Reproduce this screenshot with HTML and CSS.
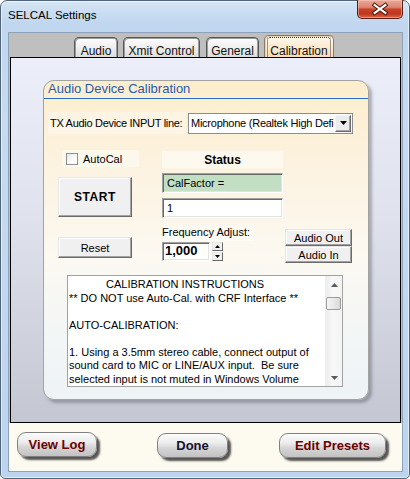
FILE: index.html
```html
<!DOCTYPE html>
<html>
<head>
<meta charset="utf-8">
<link rel="stylesheet" href="styles.css">
</head>
<body>
<div class="window">
  <div class="titlebar">
    <span class="title">SELCAL Settings</span>
    <div class="close">
      <svg width="46" height="19" viewBox="0 0 46 19">
        <path d="M18 6 L29 14 M29 6 L18 14" stroke="#4a1208" stroke-width="4.2" stroke-linecap="square" fill="none"/>
        <path d="M18 6 L29 14 M29 6 L18 14" stroke="#ffffff" stroke-width="2.2" stroke-linecap="square" fill="none"/>
      </svg>
    </div>
  </div>
  <div class="client">
    <div class="tabstrip">
      <div class="tab t-audio">Audio</div>
      <div class="tab t-xmit">Xmit Control</div>
      <div class="tab t-general">General</div>
      <div class="tab t-cal active"><span class="focus">Calibration</span></div>
    </div>
    <div class="panel">
      <div class="card">
        <div class="card-title">Audio Device Calibration</div>
        <div class="tx-row">
          <span class="tx-label">TX Audio Device INPUT line:</span>
          <div class="select">
            <span class="select-text">Microphone (Realtek High Defi</span>
            <span class="select-btn">
              <svg width="7" height="4" viewBox="0 0 7 4"><path d="M0 0 H7 L3.5 4 Z" fill="#000"/></svg>
            </span>
          </div>
        </div>
        <div class="controls">
          <div class="col col1">
            <div class="autocal"><span class="checkbox"></span><span>AutoCal</span></div>
            <div class="btn start">START</div>
            <div class="btn reset">Reset</div>
          </div>
          <div class="col col2">
            <div class="status">Status</div>
            <div class="field calfactor">CalFactor =</div>
            <div class="field value">1</div>
            <div class="freq-label">Frequency Adjust:</div>
            <div class="spin-row">
              <div class="field num">1,000</div>
              <div class="spin">
                <span class="spin-btn"><svg width="5" height="3" viewBox="0 0 5 3"><path d="M2.5 0 L5 3 H0 Z" fill="#000"/></svg></span>
                <span class="spin-btn"><svg width="5" height="3" viewBox="0 0 5 3"><path d="M0 0 H5 L2.5 3 Z" fill="#000"/></svg></span>
              </div>
            </div>
          </div>
          <div class="col col3">
            <div class="btn audio">Audio Out</div>
            <div class="btn audio">Audio In</div>
          </div>
        </div>
        <div class="textbox">
          <div class="text">
            <div class="line"><span class="indent">CALIBRATION INSTRUCTIONS</span></div>
            <div class="line">** DO NOT use Auto-Cal. with CRF Interface **</div>
            <div class="line"> </div>
            <div class="line">AUTO-CALIBRATION:</div>
            <div class="line"> </div>
            <div class="line">1. Using a 3.5mm stereo cable, connect output of</div>
            <div class="line">sound card to MIC or LINE/AUX input.  Be sure</div>
            <div class="line">selected input is not muted in Windows Volume</div>
          </div>
          <div class="scrollbar">
            <span class="sb-arrow"><svg width="7" height="4" viewBox="0 0 7 4"><path d="M3.5 0 L7 4 H0 Z" fill="#5a5a5a"/></svg></span>
            <span class="sb-track"><span class="sb-thumb"></span></span>
            <span class="sb-arrow"><svg width="7" height="4" viewBox="0 0 7 4"><path d="M0 0 H7 L3.5 4 Z" fill="#5a5a5a"/></svg></span>
          </div>
        </div>
      </div>
    </div>
    <div class="footer">
      <div class="pill p-log">View Log</div>
      <div class="pill p-done">Done</div>
      <div class="pill p-edit">Edit Presets</div>
    </div>
  </div>
</div>
</body>
</html>
```

FILE: styles.css
```css
* { box-sizing: border-box; }
html, body { margin: 0; padding: 0; }
body {
  width: 410px;
  height: 479px;
  overflow: hidden;
  background: #ffffff;
  font-family: "Liberation Sans", Arial, sans-serif;
  font-size: 11px;
  color: #000;
}

.window {
  width: 410px;
  height: 479px;
  border: 1px solid #50647a;
  border-radius: 7px 7px 5px 5px;
  background: linear-gradient(180deg, #d5e5f6 0px, #c0d7ef 22px, #c6dbf1 120px, #bcd4ed 100%);
  box-shadow: inset 0 0 0 1px rgba(255,255,255,0.55);
  display: flex;
  flex-direction: column;
}

.titlebar {
  height: 31px;
  display: flex;
  justify-content: space-between;
  align-items: flex-start;
  padding-left: 7px;
}
.title {
  margin-top: 7px;
  font-size: 11.5px;
  line-height: 14px;
  color: #000;
}
.close {
  width: 46px;
  height: 19px;
  margin-top: -1px;
  margin-right: 6px;
  border: 1px solid #5a2016;
  border-top: none;
  border-radius: 0 0 5px 5px;
  background: linear-gradient(180deg, #e9aa9b 0%, #dc8670 40%, #c8432a 52%, #bf371d 75%, #db6546 100%);
  box-shadow: inset 0 0 0 1px rgba(255,210,200,0.45);
  display: flex;
  align-items: center;
  justify-content: center;
}
.close svg { display: block; margin-left: -1px; margin-top: -1px; }

.client {
  height: 440px;
  margin: 0 6px 0 7px;
  border: 1px solid #8ea3ba;
  background: #bfbfbf;
  display: flex;
  flex-direction: column;
}

.tabstrip {
  height: 24px;
  display: flex;
  align-items: flex-end;
  padding-left: 65px;
}
.tab {
  height: 20px;
  padding-top: 6px;
  line-height: 14px;
  font-size: 12px;
  text-align: center;
  color: #111;
  border: 1px solid #575757;
  border-bottom: none;
  border-radius: 5px 5px 0 0;
  background: linear-gradient(180deg, #fdfdfd 0%, #f0f0f0 45%, #dedede 100%);
  box-shadow: inset 1px 1px 0 #9b9b9b, inset -1px 0 0 #9b9b9b;
}
.t-audio { width: 44px; }
.t-xmit { width: 77px; margin-left: 5px; }
.t-general { width: 53px; margin-left: 6px; }
.t-cal { width: 70px; margin-left: 5px; }
.tab.active {
  height: 22px;
  padding: 1px 2px 0 2px;
  border-color: #8a7a6a;
  background: linear-gradient(180deg, #fff8ee 0%, #fdebd2 50%, #fbdcb4 100%);
  box-shadow: inset 1px 1px 0 #e8d3b8;
}
.focus {
  display: block;
  height: 21px;
  padding-top: 6px;
  line-height: 14px;
  border: 1px dotted #3a3a3a;
  border-bottom: none;
  border-radius: 3px 3px 0 0;
}

.panel {
  height: 366px;
  margin: 0 1px;
  border: 1px solid #000;
  background: linear-gradient(180deg, #eceef9 0%, #dfe1ed 45%, #c4c6d2 100%);
  padding: 22px 0 0 32px;
}

.card {
  width: 326px;
  height: 320px;
  border: 1px solid #a3a3a3;
  border-radius: 11px;
  background: linear-gradient(180deg, #fcedcd 0%, #fcf3e2 30%, #fcf9f1 55%, #f3f6f6 80%, #eef3f6 100%);
  box-shadow: 3px 3px 3px rgba(60,60,70,0.35);
  display: flex;
  flex-direction: column;
}
.card-title {
  height: 18px;
  padding-left: 4px;
  border-bottom: 1px solid #2b6cbf;
  font-size: 13px;
  line-height: 15px;
  color: #1f5caf;
}

.tx-row {
  height: 22px;
  margin-top: 13px;
  display: flex;
  align-items: center;
}
.tx-label {
  width: 138px;
  height: 22px;
  margin-left: 4px;
  padding-left: 2px;
  line-height: 22px;
  letter-spacing: -0.3px;
  background: rgba(255,255,255,0.35);
  white-space: nowrap;
}
.select {
  width: 165px;
  height: 21px;
  margin-left: 2px;
  border: 1px solid #8d8d8d;
  background: #fff;
  display: flex;
  align-items: center;
  padding: 1px;
}
.select-text {
  flex: 1;
  min-width: 0;
  white-space: nowrap;
  padding-left: 1px;
  line-height: 17px;
  letter-spacing: -0.25px;
}
.select-btn {
  width: 16px;
  height: 17px;
  flex: none;
  background: #ececec;
  border: 1px solid;
  border-color: #f4f4f4 #6b6b6b #6b6b6b #f4f4f4;
  box-shadow: inset -1px -1px 0 #a6a6a6;
  display: flex;
  align-items: center;
  justify-content: center;
}
.select-btn svg { display: block; }

.controls {
  margin-top: 16px;
  padding-left: 14px;
  display: flex;
  align-items: flex-start;
}
.col { display: flex; flex-direction: column; }
.col1 { width: 81px; }
.col2 { width: 121px; margin-left: 23px; }
.col3 { width: 67px; margin-left: 2px; margin-top: 79px; }

.autocal {
  width: 77px;
  height: 17px;
  margin-left: 4px;
  background: rgba(255,255,255,0.45);
  display: flex;
  align-items: center;
  padding-left: 4px;
}
.checkbox {
  width: 12px;
  height: 12px;
  border: 1px solid #8e8f8f;
  background: linear-gradient(135deg, #e6e6e6 0%, #fdfdfd 60%, #ffffff 100%);
  margin-right: 5px;
}

.btn {
  background: #f0f0f0;
  border: 1px solid;
  border-color: #e6e6e6 #6a6a6a #6a6a6a #e6e6e6;
  box-shadow: inset -1px -1px 0 #a3a3a3, inset 1px 1px 0 #ffffff;
  display: flex;
  align-items: center;
  justify-content: center;
  color: #000;
}
.start {
  width: 74px;
  height: 40px;
  margin-top: 10px;
  font-weight: bold;
  font-size: 12px;
  letter-spacing: 0.6px;
}
.reset {
  width: 74px;
  height: 21px;
  margin-top: 20px;
}
.audio { width: 67px; height: 17px; }

.status {
  height: 17px;
  margin-top: 1px;
  background: rgba(255,255,255,0.5);
  font-weight: bold;
  font-size: 12px;
  text-align: center;
  padding-top: 2px;
  line-height: 14px;
}
.field {
  border: 1px solid;
  border-color: #a0a0a0 #ffffff #ffffff #a0a0a0;
  box-shadow: inset 1px 1px 0 #6a6a6a, inset -1px -1px 0 #e3e3e3;
  display: flex;
  align-items: center;
  padding-left: 4px;
}
.calfactor {
  height: 20px;
  margin-top: 5px;
  background: #c3dfc3;
}
.value {
  height: 20px;
  margin-top: 5px;
  background: #fff;
}
.freq-label {
  width: 92px;
  height: 15px;
  margin-top: 8px;
  line-height: 12px;
  background: rgba(255,255,255,0.45);
  white-space: nowrap;
}
.spin-row {
  height: 19px;
  margin-top: 1px;
  display: flex;
}
.num {
  width: 48px;
  height: 19px;
  background: #fff;
  font-weight: bold;
  font-size: 13px;
  padding-left: 2px;
  padding-bottom: 2px;
}
.spin {
  width: 11px;
  margin-left: 2px;
  display: flex;
  flex-direction: column;
  justify-content: space-between;
}
.spin-btn {
  height: 9px;
  background: #f0f0f0;
  border: 1px solid;
  border-color: #e8e8e8 #6a6a6a #6a6a6a #e8e8e8;
  display: flex;
  align-items: center;
  justify-content: center;
}
.spin-btn svg { display: block; }

.textbox {
  width: 276px;
  height: 112px;
  margin-top: 12px;
  margin-left: 23px;
  border: 1px solid #a2a2a2;
  background: #fff;
  display: flex;
}
.text {
  flex: 1;
  overflow: hidden;
  padding: 2px 0 0 1px;
}
.line {
  height: 13.5px;
  line-height: 13.5px;
  white-space: pre;
  color: #000;
}
.indent { padding-left: 37px; }
.scrollbar {
  width: 17px;
  display: flex;
  flex-direction: column;
  background: linear-gradient(90deg, #ececec 0%, #f8f8f8 40%, #f4f4f4 100%);
  border-left: 1px solid #f0f0f0;
}
.sb-arrow {
  height: 17px;
  display: flex;
  align-items: center;
  justify-content: center;
}
.sb-arrow svg { display: block; }
.sb-track {
  flex: 1;
  padding-top: 4px;
}
.sb-thumb {
  display: block;
  width: 15px;
  height: 13px;
  border: 1px solid #9b9b9b;
  border-radius: 2px;
  background: linear-gradient(90deg, #f6f6f6 0%, #e8e8e8 50%, #d9d9d9 100%);
}

.footer {
  height: 48px;
  background: #fdfaf0;
  display: flex;
  align-items: flex-start;
  padding: 9px 0 0 8px;
}
.pill {
  height: 25px;
  border-radius: 9px;
  border: 1px solid #808080;
  background: linear-gradient(180deg, #fbfbfb 0%, #ececec 40%, #d6d6d6 60%, #c2c2c2 100%);
  box-shadow: 3px 3px 2px rgba(45,45,45,0.8), inset 0 1px 0 #ffffff;
  display: flex;
  align-items: center;
  justify-content: center;
  font-weight: bold;
  font-size: 13px;
  color: #6c0000;
}
.p-log { width: 80px; }
.p-done { width: 71px; margin-left: 60px; margin-top: 1px; color: #121230; }
.p-edit { width: 107px; margin-left: 51px; margin-top: 1px; }
```
